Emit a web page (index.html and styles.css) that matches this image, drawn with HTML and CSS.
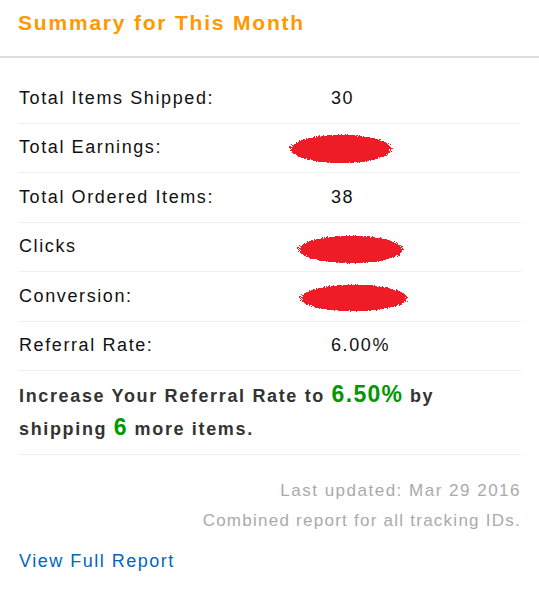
FILE: index.html
```html
<!DOCTYPE html>
<html lang="en">
<head>
  <meta charset="UTF-8" />
  <title>Summary for This Month</title>
  <link rel="stylesheet" href="styles.css">
</head>
<body>

  <div class="header">
    <h2>Summary for This Month</h2>
  </div>

  <div class="summary">
    <div class="row">
      <span class="label">Total Items Shipped:</span>
      <span class="value">30</span>
    </div>
    <div class="row">
      <span class="label">Total Earnings:</span>
      <span class="value">
        <svg class="redact earn" width="114" height="32" viewBox="0 0 114 32">
          <defs>
            <radialGradient id="fade">
              <stop offset="0.8" stop-color="#ee1c25" stop-opacity="1" />
              <stop offset="1" stop-color="#ee1c25" stop-opacity="0.3" />
            </radialGradient>
            <filter id="spray" x="0" y="0" width="100%" height="100%">
              <feTurbulence type="fractalNoise" baseFrequency="0.9" numOctaves="1" seed="3" result="noise" />
              <feComposite in="SourceGraphic" in2="noise" operator="arithmetic" k1="0" k2="1.4" k3="-1" k4="0" result="mix" />
              <feComponentTransfer in="mix" result="mask">
                <feFuncA type="discrete" tableValues="0 1" />
              </feComponentTransfer>
              <feFlood flood-color="#ee1c25" />
              <feComposite in2="mask" operator="in" />
            </filter>
          </defs>
          <ellipse cx="57" cy="16" rx="57" ry="16" fill="url(#fade)" filter="url(#spray)" />
        </svg>
      </span>
    </div>
    <div class="row">
      <span class="label">Total Ordered Items:</span>
      <span class="value">38</span>
    </div>
    <div class="row">
      <span class="label">Clicks</span>
      <span class="value">
        <svg class="redact clicks" width="118" height="31" viewBox="0 0 118 31">
          <ellipse cx="59" cy="15.5" rx="59" ry="15.5" fill="url(#fade)" filter="url(#spray)" />
        </svg>
      </span>
    </div>
    <div class="row">
      <span class="label">Conversion:</span>
      <span class="value">
        <svg class="redact conv" width="120" height="30" viewBox="0 0 120 30">
          <ellipse cx="60" cy="15" rx="60" ry="15" fill="url(#fade)" filter="url(#spray)" />
        </svg>
      </span>
    </div>
    <div class="row">
      <span class="label">Referral Rate:</span>
      <span class="value">6.00%</span>
    </div>

    <div class="promo">
      Increase Your Referral Rate to <span class="big">6.50%</span> by<br>
      shipping <span class="big">6</span> more items.
    </div>

    <div class="notes">
      <div class="updated">Last updated: Mar 29 2016</div>
      <div>Combined report for all tracking IDs.</div>
    </div>

    <a class="report" href="#">View Full Report</a>
  </div>

</body>
</html>
```

FILE: styles.css
```css
body {
  margin: 0;
  font-family: 'Liberation Sans', Arial, sans-serif;
  background: #fff;
  color: #111;
}

.header {
  padding: 0 18px;
  height: 56px;
  border-bottom: 2px solid #ddd;
  display: flex;
  align-items: center;
}

.header h2 {
  margin: 0;
  margin-top: -10px;
  font-size: 21px;
  color: #f90;
  letter-spacing: 1.8px;
}

.summary {
  padding: 16px 18px 0 18px;
}

.row {
  display: flex;
  align-items: center;
  box-sizing: border-box;
  height: 49.5px;
  border-bottom: 1px solid #eee;
  font-size: 18px;
  letter-spacing: 1.6px;
}

.label {
  width: 312px;
  flex-shrink: 0;
  padding-left: 1px;
}

.value {
  display: flex;
}

.redact {
  display: block;
}

.earn {
  margin-left: -47px;
  margin-top: 2px;
}

.clicks {
  margin-left: -39px;
  margin-top: 6px;
}

.conv {
  margin-left: -37px;
  margin-top: 3px;
}

.promo {
  padding: 9px 1px 8px 1px;
  font-size: 18px;
  font-weight: bold;
  line-height: 33px;
  color: #333;
  letter-spacing: 1.65px;
  border-bottom: 1px solid #eee;
}

.big {
  font-size: 23px;
  line-height: 1;
  color: #090;
  letter-spacing: 1.3px;
}

.notes {
  text-align: right;
  color: #aaa;
  font-size: 17px;
  line-height: 30px;
  padding-top: 21px;
  letter-spacing: 1.25px;
}

.updated {
  letter-spacing: 1.5px;
}

.report {
  display: inline-block;
  margin-top: 15px;
  padding-left: 1px;
  color: #0066c0;
  text-decoration: none;
  font-size: 18px;
  letter-spacing: 1.5px;
}
```
